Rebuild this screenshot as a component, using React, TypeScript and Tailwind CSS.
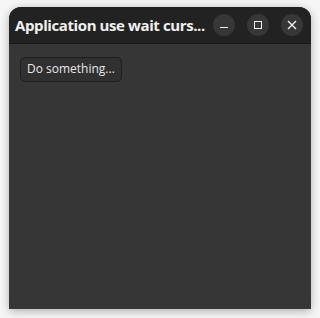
export default function App() {
  return (
    <div className="w-[320px] h-[318px] bg-[#f6f6f6] relative overflow-hidden" style={{ fontFamily: '"Open Sans", "DejaVu Sans", sans-serif' }}>
      <div className="absolute left-[9px] top-[7px] w-[302px] h-[302px] rounded-t-[12px] bg-[#363636] flex flex-col overflow-hidden shadow-[0_2px_10px_rgba(0,0,0,0.3)]">
        <div className="h-[37px] bg-[#222222] border-b border-[#1a1a1a] flex items-center pl-[6px] pr-[8px]">
          <div className="text-[15px] font-bold text-[#f0f0f0] tracking-[-0.4px] whitespace-nowrap flex-1 min-w-0">Application use wait curs...</div>
          <div className="flex gap-[12px] items-center shrink-0">
            <div className="w-[22px] h-[22px] rounded-full bg-[#373737] flex items-center justify-center">
              <div className="w-[8px] h-[1px] bg-[#f0f0f0] mt-[4px]" />
            </div>
            <div className="w-[22px] h-[22px] rounded-full bg-[#373737] flex items-center justify-center">
              <div className="w-[8px] h-[8px] border border-[#f0f0f0]" />
            </div>
            <div className="w-[22px] h-[22px] rounded-full bg-[#373737] flex items-center justify-center">
              <svg width="10" height="10" viewBox="0 0 10 10"><path d="M1 1L9 9M9 1L1 9" stroke="#f0f0f0" strokeWidth="1.4" /></svg>
            </div>
          </div>
        </div>
        <div className="pt-[11px] pl-[11px]">
          <div className="inline-flex items-center h-[25px] px-[6px] rounded-[5px] bg-[#303030] border border-[#1e1e1e] text-[12px] text-[#e8e8e8]">Do something...</div>
        </div>
      </div>
    </div>
  );
}
